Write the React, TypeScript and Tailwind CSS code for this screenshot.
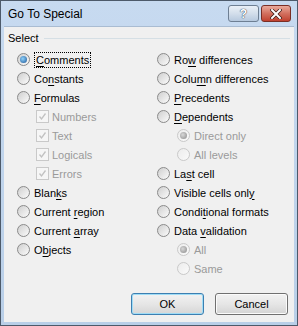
import React from 'react';

type Opt = {
  label: string;
  kind: 'radio' | 'check';
  indent?: boolean;
  checked?: boolean;
  disabled?: boolean;
  focus?: boolean;
};

const leftOptions: Opt[] = [
  { label: '&Comments', kind: 'radio', checked: true, focus: true },
  { label: 'Co&nstants', kind: 'radio' },
  { label: '&Formulas', kind: 'radio' },
  { label: 'Numbers', kind: 'check', indent: true, checked: true, disabled: true },
  { label: 'Text', kind: 'check', indent: true, checked: true, disabled: true },
  { label: 'Logicals', kind: 'check', indent: true, checked: true, disabled: true },
  { label: 'Errors', kind: 'check', indent: true, checked: true, disabled: true },
  { label: 'Blan&ks', kind: 'radio' },
  { label: 'Current &region', kind: 'radio' },
  { label: 'Current &array', kind: 'radio' },
  { label: 'O&bjects', kind: 'radio' },
];

const rightOptions: Opt[] = [
  { label: 'Ro&w differences', kind: 'radio' },
  { label: 'Colu&mn differences', kind: 'radio' },
  { label: '&Precedents', kind: 'radio' },
  { label: '&Dependents', kind: 'radio' },
  { label: 'Direct only', kind: 'radio', indent: true, checked: true, disabled: true },
  { label: 'All levels', kind: 'radio', indent: true, disabled: true },
  { label: 'La&st cell', kind: 'radio' },
  { label: 'Visible cells onl&y', kind: 'radio' },
  { label: 'Condi&tional formats', kind: 'radio' },
  { label: 'Data &validation', kind: 'radio' },
  { label: 'All', kind: 'radio', indent: true, checked: true, disabled: true },
  { label: 'Same', kind: 'radio', indent: true, disabled: true },
];

function Mnemonic({ text }: { text: string }) {
  const i = text.indexOf('&');
  if (i < 0) return <>{text}</>;
  return (
    <>
      {text.slice(0, i)}
      <span className="underline underline-offset-[2px]">{text[i + 1]}</span>
      {text.slice(i + 2)}
    </>
  );
}

function Radio({ checked, disabled }: { checked?: boolean; disabled?: boolean }) {
  return (
    <span
      className={`flex h-[13px] w-[13px] shrink-0 items-center justify-center rounded-full border ${
        disabled
          ? 'border-[#c9c9c9] bg-linear-to-br from-[#ececec] to-[#fafafa]'
          : 'border-[#8a8a8a] bg-linear-to-br from-[#cfcfcf] to-[#fbfbfb]'
      }`}
    >
      {checked && (
        <span
          className={`h-[7px] w-[7px] rounded-full ${
            disabled
              ? 'bg-[radial-gradient(circle_at_40%_40%,#d8d8d8,#8a8a8a)]'
              : 'bg-[radial-gradient(circle_at_40%_40%,#8fd2fb,#1b5496)]'
          }`}
        />
      )}
    </span>
  );
}

function Check() {
  return (
    <span className="flex h-[13px] w-[13px] shrink-0 items-center justify-center border border-[#c9c9c9] bg-[#f6f6f6]">
      <svg width="9" height="9" viewBox="0 0 9 9">
        <path d="M1.5 4.5 L3.5 7 L7.5 1.5" fill="none" stroke="#c2c2c2" strokeWidth="1.3" />
      </svg>
    </span>
  );
}

function Row({ o }: { o: Opt }) {
  return (
    <div className={`flex h-[19px] items-center ${o.indent ? (o.kind === 'check' ? 'pl-[19px]' : 'pl-[20px]') : ''}`}>
      {o.kind === 'radio' ? <Radio checked={o.checked} disabled={o.disabled} /> : <Check />}
      <span
        className={`${o.kind === 'check' ? 'ml-[3px]' : 'ml-[4px]'} ${o.disabled ? 'text-[#9a9a9a]' : 'text-black'} ${
          o.focus ? '-my-px border border-dotted border-black px-px' : ''
        } leading-[14px]`}
      >
        <Mnemonic text={o.label} />
      </span>
    </div>
  );
}

export default function App() {
  return (
    <div className="h-[326px] w-[298px] bg-white font-['Liberation_Sans',Arial,sans-serif] text-[11px]">
      <div className="flex h-full w-full flex-col border border-[#4d5a6a] bg-linear-to-b from-[#c7daf0] to-[#b9cfe8]">
        {/* Title bar */}
        <div className="flex h-[25px] shrink-0 items-center pl-[7px] pr-[6px]">
          <span className="flex-1 text-[12px] text-black">Go To Special</span>
          <div className="flex items-center gap-[2px]">
            <div className="flex h-[17px] w-[31px] items-center justify-center rounded-[3px] border border-[#6e7f93] bg-linear-to-b from-[#eaf0f7] via-[#d3deeb] to-[#b7c9de]">
              <span className="text-[12px] font-bold leading-none text-white [text-shadow:0_0_1px_#2a3a50,0_0_1px_#2a3a50]">?</span>
            </div>
            <div className="flex h-[17px] w-[30px] items-center justify-center rounded-[3px] border border-[#7a2e25] bg-linear-to-b from-[#e9a99b] via-[#d2705f] to-[#c0402f]">
              <svg width="12" height="10" viewBox="0 0 12 10">
                <path d="M2 1 L10 9 M10 1 L2 9" stroke="#3a1a14" strokeWidth="3.4" strokeLinecap="square" />
                <path d="M2 1 L10 9 M10 1 L2 9" stroke="#ffffff" strokeWidth="2" strokeLinecap="square" />
              </svg>
            </div>
          </div>
        </div>

        {/* Client area */}
        <div className="mx-[3px] mb-[3px] flex flex-1 flex-col border-t border-[#a9bcd2] bg-[#f0f0f0]">
          <div className="mt-[2px] flex h-[19px] items-center pl-[4px] pr-[4px]">
            <span className="text-black">Select</span>
            <div className="ml-[5px] h-px flex-1 bg-[#d5dfe5]" />
          </div>

          <div className="mt-[2px] grid grid-cols-[140px_1fr] pl-[13px]">
            <div className="flex flex-col">
              {leftOptions.map((o) => (
                <Row key={o.label} o={o} />
              ))}
            </div>
            <div className="flex flex-col">
              {rightOptions.map((o) => (
                <Row key={o.label} o={o} />
              ))}
            </div>
          </div>

          <div className="flex-1" />

          <div className="flex justify-end gap-[11px] pb-[7px] pr-[6px]">
            <button className="flex h-[22px] w-[73px] items-center justify-center rounded-[3px] border border-[#3c7fb1] bg-linear-to-b from-[#f2f2f2] via-[#e6e6e6] to-[#d6d6d6] text-black shadow-[inset_0_0_0_1px_#9fdcf6]">
              OK
            </button>
            <button className="flex h-[22px] w-[73px] items-center justify-center rounded-[3px] border border-[#707070] bg-linear-to-b from-[#f2f2f2] via-[#e6e6e6] to-[#d4d4d4] text-black shadow-[inset_0_0_0_1px_#fbfbfb]">
              Cancel
            </button>
          </div>
        </div>
      </div>
    </div>
  );
}
